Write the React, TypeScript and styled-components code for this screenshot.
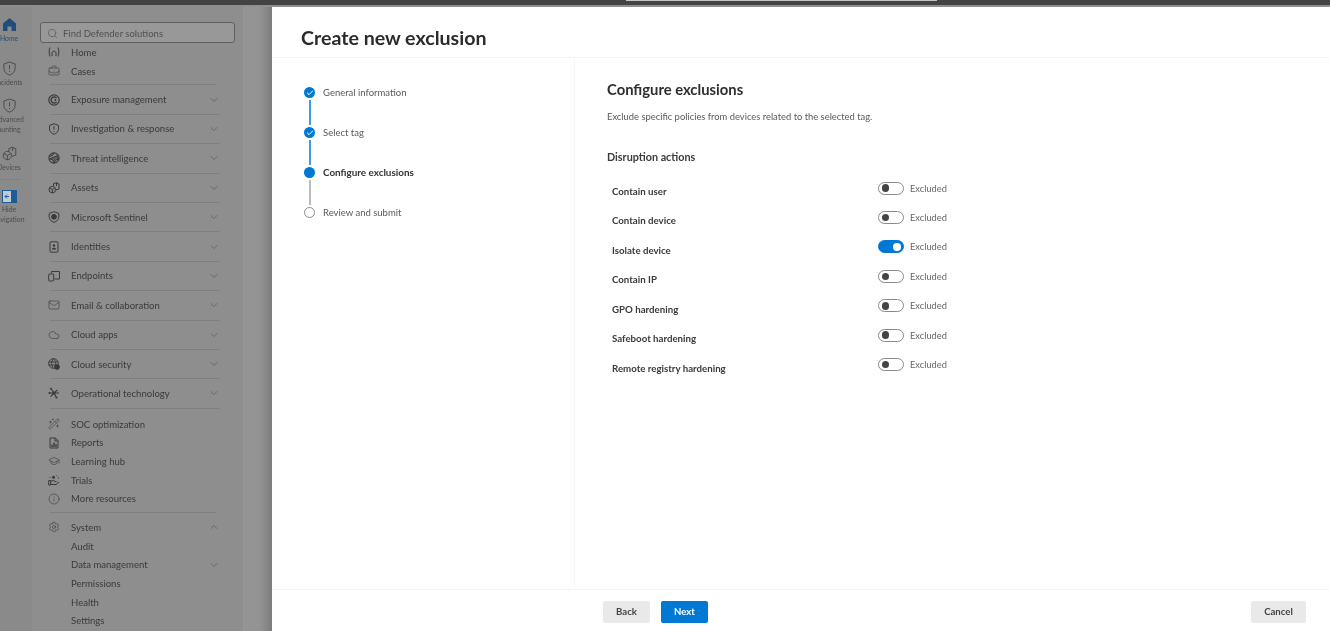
import React from "react";
import styled, { createGlobalStyle } from "styled-components";
import {
  BriefcaseBusiness, ChevronDown, ChevronUp, Cloud, GraduationCap, Info, Mail, Search, Settings, WandSparkles, Check, LucideIcon,
} from "lucide-react";

const GlobalStyle = createGlobalStyle`
  html, body { margin: 0; padding: 0; height: 100%; overflow: hidden; background: #fff; }
  #root { height: 100%; }
  * { box-sizing: border-box; }
`;

const Page = styled.div`
  width: 1330px; height: 631px; display: flex; flex-direction: column; overflow: hidden;
  font-family: Lato, "Open Sans", sans-serif; filter: blur(0.5px);
`;
const TopBar = styled.div`
  height: 7px; flex: none; background: #444341; border-bottom: 2px solid #8f8f8f; position: relative;
`;
const TopField = styled.div`
  position: absolute; left: 626px; top: 0; width: 311px; height: 1px; background: #c4c4c4;
`;
const Body = styled.div`display: flex; flex: 1; min-height: 0;`;

const Rail = styled.aside`
  width: 32px; flex: none; background: #8a8a8a; overflow: hidden; padding-top: 10px;
  display: flex; flex-direction: column;
`;
const RailItem = styled.div<{ $h: number; $active?: boolean }>`
  width: 36px; margin-left: -9px; height: ${p => p.$h}px; display: flex; flex-direction: column; align-items: center;
  font-size: 6.8px; line-height: 10px; text-align: center; color: ${p => (p.$active ? "#244f75" : "#4c4c4c")};
  svg { display: block; flex: none; margin-bottom: 1px; }
`;
const RailRule = styled.div`width: 22px; height: 1px; background: #828282; margin: 0 0 10px 0;`;

const Nav = styled.nav`
  width: 211px; flex: none; background: #8e8e8e; padding: 15px 0 0 8px; overflow: hidden; color: #3a3a3a; font-size: 9.55px;
`;
const SearchBox = styled.div`
  width: 195px; height: 21px; border: 1px solid #5e5e5e; border-radius: 3px; background: #989898;
  display: flex; align-items: center; gap: 5px; padding: 1px 0 0 6px; color: #505050; font-size: 9.5px;
`;
const NavRow = styled.div<{ $section?: boolean; $sub?: boolean }>`
  width: 170px; margin-left: 10px; height: ${p => (p.$section ? 29.4 : 18.7)}px; display: flex; align-items: center;
  padding-left: ${p => (p.$sub ? 21 : 0)}px; white-space: nowrap;
  border-bottom: ${p => (p.$section ? "1px solid #7f7f7f" : "none")};
`;
const NavIcon = styled.span`
  width: 20px; flex: none; display: flex; align-items: center; margin-left: -2px; margin-right: 3px; color: #3a3a3a;
`;
const NavLabel = styled.span`flex: 1;`;
const Caret = styled.span`display: flex; color: #505050;`;
const NavRule = styled.div<{ $top: number; $bottom: number }>`
  width: 166px; margin: ${p => p.$top}px 0 ${p => p.$bottom}px 10px; height: 1px; background: #7f7f7f;
`;
const ToolGap = styled.div`height: 6px;`;
const Gutter = styled.div`
  width: 29px; flex: none; background: linear-gradient(90deg, #949494 0%, #949494 55%, #7d7d7d 100%);
`;

const Panel = styled.main`flex: 1; min-width: 0; background: #fff; display: flex; flex-direction: column;`;
const Header = styled.header`
  height: 51px; flex: none; border-bottom: 1px solid #f3f3f3; padding: 15.5px 0 0 29px;
  font-size: 19.6px; line-height: 30px; font-weight: 700; color: #2b2b2b;
`;
const Main = styled.div`flex: 1; min-height: 0; display: flex;`;
const Stepper = styled.div`
  width: 303px; flex: none; border-right: 1px solid #f6f6f6; padding: 29px 0 0 32px;
`;
const Step = styled.div`display: flex; height: 40px; gap: 8px;`;
const StepTrack = styled.div`width: 11px; display: flex; flex-direction: column; align-items: center;`;
const Dot = styled.div<{ $state: "done" | "current" | "todo" }>`
  width: 11px; height: 11px; flex: none; border-radius: 50%; display: flex; align-items: center; justify-content: center;
  background: ${p => (p.$state === "todo" ? "#fff" : "#0078d4")};
  border: ${p => (p.$state === "todo" ? "1.3px solid #8a8a8a" : "none")};
  color: #fff;
`;
const Line = styled.div<{ $on: boolean }>`
  width: 2px; height: 25px; margin-top: 2px; background: ${p => (p.$on ? "#3f9be3" : "#bcbcbc")};
`;
const StepText = styled.div<{ $current: boolean }>`
  font-size: ${p => (p.$current ? 9.9 : 9.5)}px; line-height: 11px; font-weight: ${p => (p.$current ? 700 : 400)};
  color: ${p => (p.$current ? "#333" : "#5a5a5a")};
`;
const Content = styled.section`flex: 1; padding: 22px 0 0 32px;`;
const H2 = styled.h2`margin: 0; font-size: 14.8px; line-height: 18px; font-weight: 700; color: #2e2e2e;`;
const Desc = styled.p`margin: 11.500px 0 0; font-size: 9.4px; line-height: 14px; color: #5a5a5a;`;
const H3 = styled.h3`margin: 26.500px 0 0; font-size: 10.8px; line-height: 14px; font-weight: 700; color: #3b3b3b;`;
const Rows = styled.div`margin-top: 17.5px; padding-left: 5px; display: flex; flex-direction: column;`;
const Row = styled.div`display: flex; height: 29.45px;`;
const RowLabel = styled.div`
  width: 266px; flex: none; padding-top: 2.500px; font-size: 9.7px; line-height: 14px; font-weight: 700; color: #3a3a3a;
`;
const Toggle = styled.div<{ $on: boolean }>`
  width: 26px; height: 13px; flex: none; border-radius: 7px; display: flex; align-items: center; padding: 0 2.5px;
  justify-content: ${p => (p.$on ? "flex-end" : "flex-start")};
  background: ${p => (p.$on ? "#0078d4" : "#fff")};
  border: 1px solid ${p => (p.$on ? "#0078d4" : "#8a8a8a")};
`;
const Knob = styled.div<{ $on: boolean }>`
  width: 7.5px; height: 7.5px; border-radius: 50%; background: ${p => (p.$on ? "#fff" : "#444")};
`;
const ToggleText = styled.span`margin-left: 6px; font-size: 9.3px; line-height: 13px; color: #666;`;

const Footer = styled.footer`
  height: 42px; flex: none; border-top: 1px solid #f5f5f5; display: flex; align-items: center; padding: 2px 24px 0 331px; gap: 11px;
`;
const Button = styled.div<{ $primary?: boolean; $w: number }>`
  width: ${p => p.$w}px; height: 22px; display: flex; align-items: center; justify-content: center; border-radius: 2px;
  font-size: 9.6px; font-weight: 700; background: ${p => (p.$primary ? "#0078d4" : "#e9e9e9")};
  color: ${p => (p.$primary ? "#fff" : "#444")};
`;
const Spacer = styled.div`flex: 1;`;

type GlyphProps = { size?: number };
const glyph = (body: React.ReactNode) => ({ size = 12 }: GlyphProps) => (
  <svg width={size} height={size} viewBox="0 0 12 12" fill="none" stroke="currentColor" strokeWidth="1">{body}</svg>
);
const ArcHome = glyph(<path d="M2 1.5C.9 4 .9 8 2 10.5M10 1.5c1.1 2.5 1.1 6.5 0 9M4 10V7c0-2.4 4-2.4 4 0v3" />);
const Exposure = glyph(<><circle cx="6" cy="6" r="5.2" strokeWidth="1.2" /><path d="M8.5 4.2A3 3 0 1 0 8.5 7.8" strokeWidth="1.3" /><circle cx="7.4" cy="6" r="1" fill="currentColor" stroke="none" /></>);
const ShieldBang = glyph(<><path d="M6 .8 10.5 2.4v3.4c0 2.8-2 4.6-4.5 5.5C3.500 10.400 1.500 8.600 1.500 5.800V2.400Z" /><path d="M6 3.300v3.400M6 8v.9" /></>);
const Threat = glyph(<><circle cx="6" cy="6" r="5.100" strokeWidth="1.100" /><path d="M1.500 4.500 4.500 3.500 6 1M6 5 9 3.500 10.500 7 7.500 8.500 6 11 4.500 7.500 1.500 7Z" fill="currentColor" fillOpacity=".55" /></>);
const Assets = glyph(<><path d="M5.500 1.500 8.500.8 11 2v5L8 8" /><path d="M5.500 1.500V4M8.500.8V4" /><circle cx="4.300" cy="7.600" r="3.300" /><path d="M1.500 6l2.800 1.500L7 6M4.300 7.500V11" /></>);
const Sentinel = glyph(<><path d="M6 .7 10.800 2.400v3.400c0 2.800-2.200 4.700-4.800 5.600C3.400 10.500 1.200 8.600 1.200 5.800V2.400Z" /><circle cx="6" cy="5.800" r="2.400" fill="currentColor" /></>);
const Identities = glyph(<><rect x="2" y=".8" width="8" height="10.400" rx="1" /><circle cx="6" cy="4.500" r="1.200" fill="currentColor" stroke="none" /><path d="M3.800 8.500c0-2.200 4.400-2.200 4.400 0Z" fill="currentColor" stroke="none" /></>);
const Endpoints = glyph(<><path d="M3.500 3V1.500h8v7.500H6.500" /><rect x=".7" y="4" width="5" height="7" rx=".8" /></>);
const CloudSec = glyph(<><circle cx="5.500" cy="5.500" r="4.800" /><path d="M.8 4h9.400M.8 7h6M5.500.700c-2.500 3-2.500 6.500 0 9.600M5.500.700c2.500 3 2.500 5 1.500 7" /><circle cx="9" cy="9" r="2.400" fill="currentColor" /></>);
const OT = glyph(<><path d="M6 6 3 1.500M6 6l3.500-3.200M6 6h5M6 6 2.500 9.700M6 6l2.500 4.800M6 6H1" strokeWidth="1.100" /><circle cx="6" cy="6" r="1.500" fill="currentColor" stroke="none" /><circle cx="3" cy="1.700" r="1" fill="currentColor" stroke="none" /><circle cx="1.400" cy="6" r="1" fill="currentColor" stroke="none" /><circle cx="8.600" cy="10.500" r="1" fill="currentColor" stroke="none" /></>);
const Reports = glyph(<><path d="M2 1h5.500L10 3.500V11H2Z" /><path d="M4 10V7.500M6 10V5.500M8 10V7" strokeWidth="1.400" /><path d="M7 1v3h3" /></>);
const Trials = glyph(<><path d="M.7 6.500h2v4.500h-2ZM2.700 7.500c2-1.500 3-1 4.300 0h1.500M2.700 10.500H8L11 8" /><circle cx="5.500" cy="3.200" r="1.500" fill="currentColor" stroke="none" /><path d="M8.500 1.500l.8.800M10 4h1M1.500 3.500h1" /></>);
const RailShield = glyph(<><path d="M6 .8 10.500 2.400v3.400c0 2.800-2 4.600-4.500 5.500C3.500 10.400 1.500 8.600 1.500 5.800V2.400Z" strokeWidth=".8" /><path d="M6 3.300v3.400M6 8v.8" strokeWidth=".8" /></>);
const RailDevices = glyph(<><path d="M5.500 2 8.500 1 11 2.200v5L8 8.300M5.500 2v2.300M8.500 1v3" strokeWidth=".8" /><circle cx="4.300" cy="7.600" r="3.300" strokeWidth=".8" /><path d="M1.500 6l2.800 1.500L7 6M4.300 7.500V11" strokeWidth=".8" /></>);
const RailHome = () => (
  <svg width="15" height="15" viewBox="0 0 15 15" fill="#214e78"><path d="M7.500 1 14 6.500V14H9.500V9.500h-4V14H1V6.500Z" /></svg>
);
const RailHide = () => (
  <svg width="15" height="13" viewBox="0 0 15 13"><rect x=".5" y=".5" width="14" height="12" fill="#c2ccd6" stroke="#1f5c94" /><rect x="9" y="0" width="6" height="13" fill="#1f5c94" /><path d="M7 6.500H3M5 4.500l-2 2 2 2" fill="none" stroke="#1f5c94" /></svg>
);

type IconType = LucideIcon | ((p: GlyphProps) => React.ReactElement);
type Item = { label: string; icon?: IconType };
const top: Item[] = [{ label: "Home", icon: ArcHome }, { label: "Cases", icon: BriefcaseBusiness }];
const sections: Item[] = [
  { label: "Exposure management", icon: Exposure },
  { label: "Investigation & response", icon: ShieldBang },
  { label: "Threat intelligence", icon: Threat },
  { label: "Assets", icon: Assets },
  { label: "Microsoft Sentinel", icon: Sentinel },
  { label: "Identities", icon: Identities },
  { label: "Endpoints", icon: Endpoints },
  { label: "Email & collaboration", icon: Mail },
  { label: "Cloud apps", icon: Cloud },
  { label: "Cloud security", icon: CloudSec },
  { label: "Operational technology", icon: OT },
];
const tools: Item[] = [
  { label: "SOC optimization", icon: WandSparkles },
  { label: "Reports", icon: Reports },
  { label: "Learning hub", icon: GraduationCap },
  { label: "Trials", icon: Trials },
  { label: "More resources", icon: Info },
];
const system: { label: string; caret?: boolean }[] = [
  { label: "Audit" }, { label: "Data management", caret: true }, { label: "Permissions" }, { label: "Health" }, { label: "Settings" },
];
const steps = [
  { label: "General information", state: "done" as const },
  { label: "Select tag", state: "done" as const },
  { label: "Configure exclusions", state: "current" as const },
  { label: "Review and submit", state: "todo" as const },
];
const actions = [
  { label: "Contain user", on: false }, { label: "Contain device", on: false }, { label: "Isolate device", on: true },
  { label: "Contain IP", on: false }, { label: "GPO hardening", on: false }, { label: "Safeboot hardening", on: false },
  { label: "Remote registry hardening", on: false },
];

const NavLine = ({ item, section }: { item: Item; section?: boolean }) => {
  const Icon = item.icon as React.ComponentType<{ size?: number; strokeWidth?: number }> | undefined;
  return (
    <NavRow $section={section}>
      <NavIcon>{Icon && <Icon size={12} strokeWidth={1.2} />}</NavIcon>
      <NavLabel>{item.label}</NavLabel>
      {section && <Caret><ChevronDown size={12} strokeWidth={1.2} /></Caret>}
    </NavRow>
  );
};

export default function App() {
  return (
    <Page>
      <GlobalStyle />
      <TopBar><TopField /></TopBar>
      <Body>
        <Rail>
          <RailItem $h={44} $active><RailHome />Home</RailItem>
          <RailItem $h={37}><RailShield size={15} />Incidents</RailItem>
          <RailItem $h={48}><RailShield size={15} />Advanced hunting</RailItem>
          <RailItem $h={33}><RailDevices size={15} />Devices</RailItem>
          <RailRule />
          <RailItem $h={40}><RailHide />Hide navigation</RailItem>
        </Rail>
        <Nav>
          <SearchBox><Search size={11} strokeWidth={1.3} />Find Defender solutions</SearchBox>
          {top.map(i => <NavLine key={i.label} item={i} />)}
          <NavRule $top={4} $bottom={0} />
          {sections.map(i => <NavLine key={i.label} item={i} section />)}
          <ToolGap />
          {tools.map(i => <NavLine key={i.label} item={i} />)}
          <NavRule $top={4} $bottom={5} />
          <NavRow>
            <NavIcon><Settings size={12} strokeWidth={1.2} /></NavIcon>
            <NavLabel>System</NavLabel>
            <Caret><ChevronUp size={12} strokeWidth={1.2} /></Caret>
          </NavRow>
          {system.map(s => (
            <NavRow key={s.label} $sub>
              <NavLabel>{s.label}</NavLabel>
              {s.caret && <Caret><ChevronDown size={12} strokeWidth={1.2} /></Caret>}
            </NavRow>
          ))}
        </Nav>
        <Gutter />
        <Panel>
          <Header>Create new exclusion</Header>
          <Main>
            <Stepper>
              {steps.map((s, i) => (
                <Step key={s.label}>
                  <StepTrack>
                    <Dot $state={s.state}>{s.state === "done" && <Check size={8} strokeWidth={3} />}</Dot>
                    {i < steps.length - 1 && <Line $on={s.state === "done"} />}
                  </StepTrack>
                  <StepText $current={s.state === "current"}>{s.label}</StepText>
                </Step>
              ))}
            </Stepper>
            <Content>
              <H2>Configure exclusions</H2>
              <Desc>Exclude specific policies from devices related to the selected tag.</Desc>
              <H3>Disruption actions</H3>
              <Rows>
                {actions.map(a => (
                  <Row key={a.label}>
                    <RowLabel>{a.label}</RowLabel>
                    <Toggle $on={a.on}><Knob $on={a.on} /></Toggle>
                    <ToggleText>Excluded</ToggleText>
                  </Row>
                ))}
              </Rows>
            </Content>
          </Main>
          <Footer>
            <Button $w={47}>Back</Button>
            <Button $w={47} $primary>Next</Button>
            <Spacer />
            <Button $w={55}>Cancel</Button>
          </Footer>
        </Panel>
      </Body>
    </Page>
  );
}
